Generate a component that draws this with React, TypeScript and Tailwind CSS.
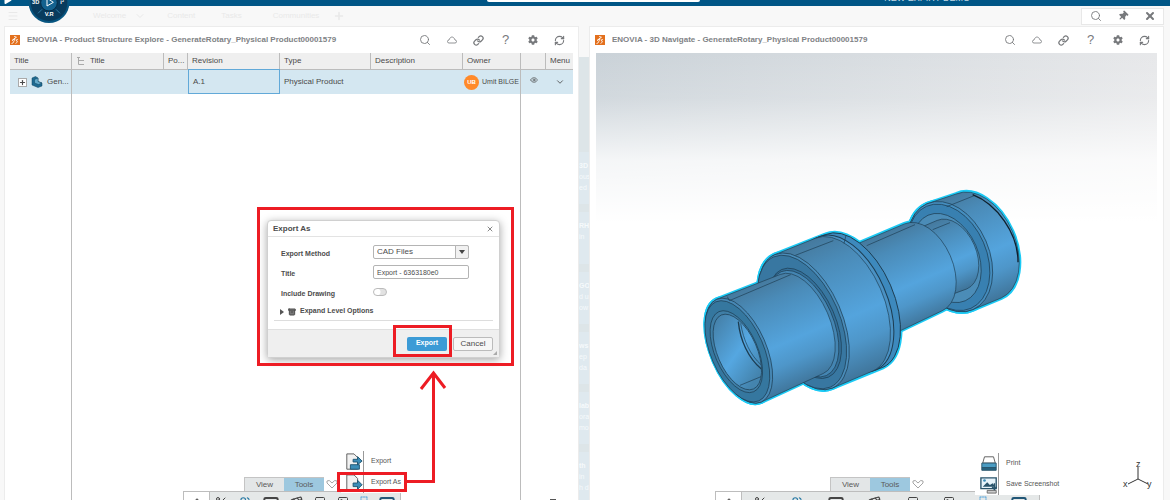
import type { ReactNode } from 'react';
import {
  Archive,
  ChevronDown,
  ChevronUp,
  Clapperboard,
  Eye,
  Image,
  Link,
  Menu,
  Monitor,
  Plus,
  RefreshCw,
  Scissors,
  Search,
  Square,
  SquareDashed,
  Users,
  X,
} from 'lucide-react';
import { FaCog, FaPlay, FaThumbtack } from 'react-icons/fa';

const RAD = Math.PI / 180;
const TILT = 23.5;
const UX = Math.sin(TILT * RAD);
const UY = Math.cos(TILT * RAD);
const EDGE = '#1d3d52';

type Ring = { x: number; y: number; r: number; k: number };

/* Rings of the shaft, nose to tail. k is the ratio of the minor axis to the major one. */
const nose: Ring = { x: 147, y: 512, r: 168, k: 0.49 };
const noseEnd: Ring = { x: 335, y: 432, r: 162, k: 0.52 };
const collar: Ring = { x: 341, y: 424, r: 218, k: 0.53 };
const collarEdge: Ring = { x: 462, y: 374, r: 217, k: 0.55 };
const collarEnd: Ring = { x: 492, y: 363, r: 217, k: 0.55 };
const shaft: Ring = { x: 500, y: 352, r: 147, k: 0.56 };
const shaftEnd: Ring = { x: 700, y: 262, r: 142, k: 0.62 };
const neck: Ring = { x: 715, y: 252, r: 110, k: 0.62 };
const neckEnd: Ring = { x: 786, y: 224, r: 112, k: 0.65 };
const head: Ring = { x: 780, y: 230, r: 173, k: 0.68 };
const headEnd: Ring = { x: 866, y: 198, r: 170, k: 0.65 };

function hull(a: Ring, b: Ring) {
  const p = (c: Ring, s: number) => `${c.x + s * UX * c.r} ${c.y + s * UY * c.r}`;
  const arc = (c: Ring) => `${c.r * c.k} ${c.r} ${-TILT} 0`;
  return `M${p(a, -1)}L${p(b, -1)}A${arc(b)} 1 ${p(b, 1)}L${p(a, 1)}A${arc(a)} 1 ${p(a, -1)}Z`;
}

function Oval({ ring, fill = 'none', width = 2 }: { ring: Ring; fill?: string; width?: number }) {
  return (
    <ellipse
      rx={ring.r * ring.k}
      ry={ring.r}
      transform={`translate(${ring.x} ${ring.y}) rotate(${-TILT})`}
      fill={fill}
      stroke={EDGE}
      strokeWidth={width}
    />
  );
}

function Barrel({ id, from, to }: { id: string; from: Ring; to: Ring }) {
  return (
    <>
      <linearGradient
        id={id}
        gradientUnits="userSpaceOnUse"
        x1={from.x - UX * from.r}
        y1={from.y - UY * from.r}
        x2={from.x + UX * from.r}
        y2={from.y + UY * from.r}
      >
        <stop offset="0" stopColor="#45799d" />
        <stop offset="0.2" stopColor="#4a8bb8" />
        <stop offset="0.6" stopColor="#54a4dd" />
        <stop offset="0.78" stopColor="#4e96c9" />
        <stop offset="1" stopColor="#40769c" />
      </linearGradient>
      <path d={hull(from, to)} fill={`url(#${id})`} stroke={EDGE} strokeWidth="2" />
    </>
  );
}

function RotaryModel() {
  const outlines = [
    [nose, noseEnd],
    [collar, collarEnd],
    [shaft, shaftEnd],
    [head, headEnd],
  ];
  return (
    <svg viewBox="0 0 1020 690" className="absolute left-[94px] top-[127px] w-[340px]" role="img" aria-label="Rotary">
      <defs>
        <linearGradient id="bore" x1="0" y1="0" x2="0.3" y2="1">
          <stop offset="0" stopColor="#41789d" />
          <stop offset="0.6" stopColor="#55a7e1" />
          <stop offset="1" stopColor="#4484ae" />
        </linearGradient>
        <clipPath id="boreClip">
          <ellipse rx="59" ry="121" transform="translate(142 516) rotate(-23.5)" />
        </clipPath>
      </defs>
      {outlines.map(([a, b], i) => (
        <g key={i} fill="#1ccaf5" stroke="#1ccaf5" strokeWidth="12">
          <path d={hull(a, b)} />
          <ellipse rx={a.r * a.k} ry={a.r} transform={`translate(${a.x} ${a.y}) rotate(${-TILT})`} />
        </g>
      ))}

      <Barrel id="head" from={head} to={headEnd} />
      <Oval ring={head} fill="#458dbe" />
      <Oval ring={{ ...head, x: 776, y: 232, r: 167 }} fill="#3880b1" />
      <Oval ring={{ ...head, x: 770, y: 234, r: 140 }} fill="#4b8cb7" />
      <Barrel id="neck" from={neck} to={neckEnd} />
      <Barrel id="shaft" from={shaft} to={shaftEnd} />

      <path d={hull(collarEdge, collarEnd)} fill="#3d89bd" stroke={EDGE} strokeWidth="3" />
      <Oval ring={{ ...collarEdge, x: 472, y: 370 }} fill="#4a91c3" width={3} />
      <Barrel id="collar" from={collar} to={collarEdge} />
      <Oval ring={collar} fill="#4a8cb9" />
      <Oval ring={{ ...collar, x: 336, y: 426, r: 213 }} fill="#3877a1" />
      <Oval ring={{ ...noseEnd, x: 345, y: 430, r: 176 }} fill="#34709a" />
      <Oval ring={{ ...noseEnd, x: 341, y: 431, r: 170 }} fill="#4485b2" />

      <Barrel id="nose" from={nose} to={noseEnd} />
      <Oval ring={nose} fill="#4788b5" />
      <Oval ring={{ ...nose, x: 142, y: 514, r: 162 }} fill="#35779f" />
      <Oval ring={{ ...nose, x: 139, y: 515, r: 131 }} fill="#3f7ea6" />
      <Oval ring={{ ...nose, x: 142, y: 516, r: 121 }} fill="url(#bore)" />
      <g clipPath="url(#boreClip)" fill="none" stroke={EDGE}>
        <path d="M145 425C150 480 175 535 215 568" strokeWidth="4" />
        <path d="M152 430C160 480 180 525 215 556" strokeWidth="2" />
        <path d="M150 616L225 585" strokeWidth="2" />
      </g>
      <g stroke={EDGE} strokeWidth="2" fill="none">
        <path d="M118 362L302 284M118 362L112 350M316 226L430 182M462 190L468 166M530 197L675 134M728 149L780 128M770 80L855 46" />
        <path d="M848 44C920 72 985 160 984 247" stroke="#10202c" strokeWidth="4" />
      </g>
    </svg>
  );
}

function Brand() {
  return (
    <svg viewBox="0 0 20 20" className="size-2.5 shrink-0" aria-hidden="true">
      <path d="M0 0H20V20H0Z" fill="#e3701d" />
      <path d="M8 3L13 4L9 8M5 9L10 8L6 16L3 17M16 9L12 10L15 14L11 17M11 5L4 12" fill="none" stroke="#fff" strokeWidth="1.6" />
    </svg>
  );
}

function Compass() {
  return (
    <svg viewBox="0 0 126 72" className="absolute left-7 top-0 z-10 w-[42px]" role="img" aria-label="Compass">
      <circle cx="63" cy="8" r="61" fill="#075580" />
      <circle cx="63" cy="8" r="55" fill="#083b5d" />
      <circle cx="63" cy="8" r="25" fill="#14628f" stroke="#062c47" strokeWidth="3" />
      <path d="M57 -6V18L76 7Z" fill="none" stroke="#fff" strokeWidth="3" />
      <path d="M30 40L42 28M96 40L84 28" stroke="#2f7ba6" strokeWidth="3" />
      <g fill="#fff" fontFamily="Liberation Sans, sans-serif" fontWeight="700" fontSize="17">
        <text x="12" y="12">3D</text>
        <text x="97" y="12">i²</text>
        <text x="50" y="49">V.R</text>
      </g>
    </svg>
  );
}

const actions = [
  { label: 'Search', icon: <Search className="size-3" strokeWidth={1.8} /> },
  {
    label: 'Cloud',
    icon: (
      <svg viewBox="0 0 20 16" className="w-2.5" fill="none" stroke="currentColor" strokeWidth="1.6">
        <path d="M4 14A3 3 0 0 1 4 8C5 4 8 2 10 2S15 4 16 8A3 3 0 0 1 16 14Z" />
      </svg>
    ),
  },
  { label: 'Link', icon: <Link className="size-[11px]" strokeWidth={2.8} /> },
  { label: 'Help', icon: <span className="text-[13px]">?</span> },
  { label: 'Settings', icon: <FaCog className="size-2.5" /> },
  { label: 'Refresh', icon: <RefreshCw className="size-[11px]" strokeWidth={2.5} /> },
];

function Widget({ title, children }: { title: string; children: ReactNode }) {
  return (
    <section className="relative flex min-w-0 flex-1 flex-col border-x border-t border-[#ececec] bg-white px-[5px]">
      <header className="flex h-[26px] shrink-0 items-center">
        <Brand />
        <h2 className="ml-[7px] flex-1 truncate text-[8px] font-bold text-[#808285]">{title}</h2>
        {actions.map((a) => (
          <button key={a.label} aria-label={a.label} className="flex h-5 w-[27px] items-center justify-center text-[#77797c]">
            {a.icon}
          </button>
        ))}
      </header>
      {children}
    </section>
  );
}

function StructureTable() {
  const th = 'h-4 border-r border-[#bcbcbc] px-1 text-left font-normal';
  return (
    <table className="h-full w-full table-fixed border-separate border-spacing-0 text-[8px] text-[#4a4a4a]">
      <colgroup>
        <col className="w-[62px]" />
        <col className="w-[92px]" />
        <col className="w-[24px]" />
        <col className="w-[92px]" />
        <col className="w-[91px]" />
        <col />
        <col className="w-[58px]" />
        <col className="w-[25px]" />
        <col className="w-[27px]" />
      </colgroup>
      <thead className="bg-[#efefef]">
        <tr>
          <th className={th}>Title</th>
          <th className={th}>
            <span className="flex items-center gap-1">
              <svg viewBox="0 0 10 10" className="size-2.5" fill="none" stroke="#aaa" aria-hidden="true">
                <path d="M2.5 1V8.500H8M2.500 4.500H6M1 1.500H4M6 4.500H8" />
              </svg>
              Title
            </span>
          </th>
          <th className={th}>Po...</th>
          <th className={th}>Revision</th>
          <th className={th}>Type</th>
          <th className={th}>Description</th>
          <th className={th}>Owner</th>
          <th className={th} aria-label="Visibility" />
          <th className="h-4 pl-1 text-left font-normal">Menu</th>
        </tr>
      </thead>
      <tbody>
        <tr className="bg-[#d4e7f1]">
          <td className="h-[25px] border-r border-t border-[#bcbcbc] pl-2">
            <span className="flex items-center gap-1">
              <button aria-label="Expand" className="flex size-[9px] items-center justify-center border border-[#aaa] bg-white">
                <Plus className="size-[7px]" strokeWidth={4} />
              </button>
              <svg viewBox="0 0 24 24" className="size-3" aria-hidden="true">
                <path d="M2 4L9 1L14 4V11L22 14V20L14 23L2 18Z" fill="#1e6a91" stroke="#134561" />
                <path d="M7 7L14 4V11L22 14L15 17L7 14Z" fill="#64a9c9" stroke="#134561" />
              </svg>
              Gen...
            </span>
          </td>
          <td className="border-t border-[#bcbcbc]" />
          <td className="border-t border-[#bcbcbc]" />
          <td className="border border-[#62a9d8] px-1">A.1</td>
          <td className="border-t border-[#bcbcbc] px-1">Physical Product</td>
          <td className="border-t border-[#bcbcbc]" />
          <td className="border-r border-t border-[#bcbcbc] pl-px">
            <span className="flex items-center gap-[3px] whitespace-nowrap text-[7px]">
              <span className="flex size-[15px] shrink-0 items-center justify-center rounded-full bg-[#ff8a2a] text-[6px] font-bold text-white">
                UB
              </span>
              Umit BILGE
            </span>
          </td>
          <td className="border-t border-[#bcbcbc]">
            <Eye className="mx-auto mb-1 size-2" />
          </td>
          <td className="border-t border-[#bcbcbc]">
            <button aria-label="Row menu" className="mx-auto block">
              <ChevronDown className="size-2.5" />
            </button>
          </td>
        </tr>
        <tr className="h-full">
          <td className="border-r border-[#bcbcbc]" />
          <td colSpan={6} className="border-r border-[#bcbcbc]" />
          <td colSpan={2} />
        </tr>
      </tbody>
    </table>
  );
}

function ExportDialog() {
  return (
    <form
      role="dialog"
      aria-label="Export As"
      className="absolute left-[262px] top-[193px] flex w-[233px] flex-col rounded-sm border border-[#d0d0d0] bg-white text-[7px] text-[#4c4c4c] shadow-[0_2px_8px_rgba(0,0,0,0.35)]"
    >
      <header className="flex h-4 items-center justify-between border-b border-[#e3e3e3] px-[5px]">
        <h3 className="text-[8px] font-bold">Export As</h3>
        <button type="button" aria-label="Close">
          <X className="size-2" />
        </button>
      </header>
      <div className="grid grid-cols-[92px_96px] items-end gap-y-1.5 pl-[13px] pt-2 font-bold">
        <label htmlFor="method">Export Method</label>
        <div className="relative">
          <select id="method" className="block h-3.5 w-full appearance-none rounded-xs border border-[#b4b4b4] px-[3px] text-[8px] font-normal">
            <option>CAD Files</option>
          </select>
          <span className="pointer-events-none absolute inset-y-0 right-0 flex w-3.5 items-center justify-center rounded-r-xs border border-[#b4b4b4] bg-[#f1f1f1]">
            <svg viewBox="0 0 6 4" className="w-1.5" aria-hidden="true">
              <path d="M0 0H6L3 4Z" fill="#444" />
            </svg>
          </span>
        </div>
        <label htmlFor="title">Title</label>
        <input id="title" defaultValue="Export - 6363180e0" className="h-3.5 w-full rounded-xs border border-[#b4b4b4] px-[3px] font-normal" />
        <label htmlFor="drawing">Include Drawing</label>
        <input
          id="drawing"
          type="checkbox"
          className="my-[3px] h-2 w-3.5 appearance-none rounded-full border border-[#bbb] bg-[radial-gradient(circle_at_3px_3px,#fff_3px,#e2e2e2_4px)]"
        />
      </div>
      <button type="button" className="mx-1.5 mt-1 flex h-[18px] items-center gap-1 border-b border-[#ddd] pl-1.5 font-bold">
        <svg viewBox="0 0 4 6" className="w-1" aria-hidden="true">
          <path d="M0 0V6L4 3Z" fill="#555" />
        </svg>
        <Archive className="size-2 fill-[#777]" strokeWidth={3} />
        Expand Level Options
      </button>
      <footer className="mt-2 flex h-7 items-center justify-end gap-1.5 border-t border-[#e0e0e0] bg-[#efefef] px-1.5">
        <button type="submit" className="h-3.5 w-10 rounded-xs bg-[#3c9bd6] font-bold text-white">
          Export
        </button>
        <button type="button" className="h-3.5 w-10 rounded-xs border border-[#bbb] bg-[#f6f6f6] text-[8px]">
          Cancel
        </button>
      </footer>
      <svg viewBox="0 0 4 4" className="absolute bottom-0.5 right-0.5 w-1" aria-hidden="true">
        <path d="M4 0V4H0Z" fill="#aaa" />
      </svg>
    </form>
  );
}

function Tabs() {
  return (
    <div className="flex items-center text-[8px] text-[#5a5a5a]">
      <button className="h-3.5 w-10 border-l border-t border-[#c4c4c4] bg-[#e3e6e7]">View</button>
      <button className="h-3.5 w-10 border-t border-[#c4c4c4] bg-[#9dc8df]">Tools</button>
      <svg viewBox="0 0 12 10" className="ml-0.5 w-3" fill="none" stroke="#a5a5a5" aria-hidden="true">
        <path d="M1 2Q3 0 6 4Q9 0 11 2V4L6 9L1 4Z" />
      </svg>
    </div>
  );
}

const tools = [
  { label: 'Cut', icon: <Scissors className="size-3" /> },
  { label: 'Members', icon: <Users className="size-3.5 text-[#2b7ba5]" /> },
  { label: 'Screen', icon: <Monitor className="size-4" strokeWidth={3} /> },
  { label: 'Capture', icon: <Clapperboard className="size-3.5" /> },
  { label: 'Frame', icon: <Square className="size-3" /> },
  { label: 'Picture', icon: <Image className="size-3" /> },
  { label: 'Select', icon: <SquareDashed className="size-2 fill-[#d4e7f7] text-[#6fb1dd]" strokeWidth={4} /> },
  { label: 'Display', icon: <Monitor className="size-4 text-[#225777]" strokeWidth={3} /> },
];

function Toolbar({ items }: { items: typeof tools }) {
  return (
    <div className="flex h-[9px] items-start overflow-hidden border border-b-0 border-[#bdbdbd] bg-[#e5e8e8]">
      <button aria-label="Collapse" className="flex h-5 w-[26px] shrink-0 items-start justify-center border-r border-[#bdbdbd] bg-white pt-[3px]">
        <ChevronUp className="size-2.5" />
      </button>
      <div className="flex flex-1 items-start justify-around pt-1 text-[#444]">
        {items.map((t) => (
          <button key={t.label} aria-label={t.label} className="flex">
            {t.icon}
          </button>
        ))}
      </div>
    </div>
  );
}

function FlyoutItem({ label, children }: { label: string; children: ReactNode }) {
  return (
    <button className="flex h-[21px] items-center whitespace-nowrap text-[7px] text-[#555]">
      <svg viewBox="0 0 20 20" className="size-[18px]" aria-hidden="true">
        {children}
      </svg>
      <span className="flex h-full items-center border-l border-[#999] pl-[7px]">{label}</span>
    </button>
  );
}

/* Highlights and the arrow that walk the user from the menu to the dialog */
function Callouts() {
  return (
    <svg className="pointer-events-none absolute left-[-5px] top-[-27px] h-[500px] w-[570px]" fill="none" stroke="#ed1c24" strokeWidth="3" aria-hidden="true">
      <path d="M258.500 208.500H512.500V364.500H258.500Z" />
      <path d="M394.500 326.500H450.500V355.500H394.500Z" />
      <path d="M338.500 473.500H405.500V490.500H338.500Z" />
      <path d="M406 481.500H433.500V373M421 389L433.500 373L445 388" />
    </svg>
  );
}

const feed = [
  ['3D', 'ous', 'ed i'],
  ['RH', 'in'],
  ['GO', 'd u', 'ow'],
  ['ws', 'ep', 'da'],
  ['lab', 'ora', 'mo'],
  ['th', 'in', 'h d'],
];

export default function App() {
  return (
    <div className="relative flex h-screen flex-col overflow-hidden bg-[#f8f8f8] font-['Liberation_Sans',Arial,sans-serif] text-[8px]">
      <header className="relative flex h-1.5 shrink-0 justify-center bg-[#005686]">
        <FaPlay className="absolute left-1 -top-1 size-2 text-white" />
        <Compass />
        <input aria-label="Search" className="ml-4 h-[2px] w-[213px] rounded-b-xs bg-white" />
        <span className="absolute right-[200px] top-[-6px] text-[9px] leading-[8px] text-[#c5dbe7]">NEW EXPIRY DEMO</span>
      </header>

      <nav className="flex h-5 shrink-0 items-center pl-[7px] pr-1.5 text-[#e9e9e9]">
        <button aria-label="Menu">
          <Menu className="size-3" />
        </button>
        <a href="#welcome" className="ml-[74px]">Welcome</a>
        <ChevronDown className="ml-2 size-3" />
        <a href="#content" className="ml-[21px]">Content</a>
        <a href="#tasks" className="ml-[26px]">Tasks</a>
        <a href="#communities" className="ml-[31px]">Communities</a>
        <button aria-label="Add tab" className="ml-3.5">
          <Plus className="size-3" strokeWidth={3} />
        </button>
        <div className="ml-auto flex h-[17px] items-center border border-[#e8e8e8] bg-white text-[#77797c]">
          <button aria-label="Search" className="flex w-[27px] justify-center">
            <Search className="size-3" strokeWidth={1.8} />
          </button>
          <button aria-label="Pin" className="flex w-[27px] justify-center">
            <FaThumbtack className="size-2.5 rotate-45" />
          </button>
          <button aria-label="Close" className="flex w-[27px] justify-center">
            <X className="size-3" strokeWidth={4} />
          </button>
        </div>
      </nav>

      <main className="flex min-h-0 flex-1 pl-1 pr-1.5">
        <Widget title="ENOVIA - Product Structure Explore - GenerateRotary_Physical Product00001579">
          <div className="min-h-0 flex-1">
            <StructureTable />
          </div>
          <div className="absolute bottom-0 left-[178px] flex w-[218px] flex-col">
            <div className="ml-[61px]">
              <Tabs />
            </div>
            <Toolbar items={tools} />
          </div>
          <div className="absolute bottom-[7px] left-[336px] flex w-[72px] flex-col bg-white pl-1 pt-0.5">
            <FlyoutItem label="Export">
              <path d="M2 1H10L14 5V18H2Z" fill="#f2f2f2" stroke="#555" />
              <path d="M6 13H16V18H6ZM9 7H14V4L19 9L14 13V10H9Z" fill="#3b8db8" stroke="#1c526f" />
            </FlyoutItem>
            <FlyoutItem label="Export As">
              <path d="M2 1H10L14 5V18H2Z" fill="#f2f2f2" stroke="#555" />
              <path d="M9 10H14V7L19 12L14 17V14H9Z" fill="#3b8db8" stroke="#1c526f" />
            </FlyoutItem>
          </div>
          <div className="absolute bottom-0 right-[22px] h-px w-1.5 bg-[#555]" />
          <ExportDialog />
          <Callouts />
        </Widget>

        {/* Sliver of the page behind the two widgets */}
        <div className="mt-[31px] flex w-2.5 shrink-0 flex-col gap-2 overflow-hidden bg-[#dde5e8] pt-[95px] text-[7px] leading-[11px] text-[#f6fafc]">
          {feed.map((lines) => (
            <div key={lines[0]} className="h-[52px] shrink-0 overflow-hidden whitespace-nowrap bg-[#dfe9ef] pt-2">
              {lines.map((line, i) => (
                <p key={line} className={i === 0 ? 'font-bold' : ''}>{line}</p>
              ))}
            </div>
          ))}
        </div>

        <Widget title="ENOVIA - 3D Navigate - GenerateRotary_Physical Product00001579">
          <div className="relative mx-px min-h-0 flex-1 overflow-hidden bg-[linear-gradient(to_bottom,transparent_0%,rgba(255,255,255,0.15)_10%,rgba(255,255,255,0.8)_24%,white_38%),linear-gradient(to_right,#cad2d8,#e7e8ea)]">
            <RotaryModel />
            <svg viewBox="0 0 32 32" className="absolute bottom-2 right-1 w-8" fill="none" stroke="#333" role="img" aria-label="Axes">
              <path d="M17 7V19L7 24M17 19L27 24" />
              <g fill="#333" stroke="none" fontSize="9" fontFamily="Liberation Sans, sans-serif">
                <text x="15" y="7">z</text>
                <text x="2" y="27">x</text>
                <text x="26" y="27">y</text>
              </g>
            </svg>
          </div>
          <div className="absolute bottom-0 left-[125px] flex w-[325px] flex-col">
            <div className="ml-[115px]">
              <Tabs />
            </div>
            <Toolbar items={tools} />
          </div>
          <div className="absolute bottom-[5px] left-[385px] flex w-[98px] flex-col bg-white pl-[5px] pt-0.5">
            <FlyoutItem label="Print">
              <path d="M5 2H15L17 9H3Z" fill="#fff" stroke="#555" />
              <path d="M2 9H18V14H2Z" fill="#4a9cc3" stroke="#28536a" />
              <path d="M2 14H18V17H2Z" fill="#27637f" stroke="#28536a" />
            </FlyoutItem>
            <FlyoutItem label="Save Screenshot">
              <path d="M1 2H18V14H1Z" fill="#e6f3fa" stroke="#28536a" strokeWidth="1.500" />
              <path d="M3 12L8 7L11 10L14 8L17 12Z" fill="#28536a" />
              <circle cx="5" cy="5" r="1.500" fill="#3b8db8" />
              <path d="M8 16H18V19H8Z" fill="#ccc" stroke="#666" />
              <path d="M16 8V14M13.500 12L16 15L18.500 12" fill="none" stroke="#28536a" strokeWidth="1.500" />
            </FlyoutItem>
          </div>
        </Widget>
      </main>
    </div>
  );
}
